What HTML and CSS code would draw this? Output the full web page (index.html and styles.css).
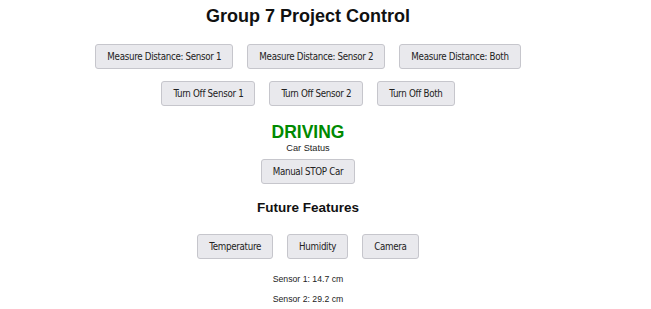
FILE: index.html
```html
<!DOCTYPE html>
<html>
<head>
<meta charset="utf-8">
<link rel="stylesheet" href="styles.css">
</head>
<body>
<main class="page">
  <h1 class="title">Group 7 Project Control</h1>
  <div class="row row-measure">
    <button class="btn">Measure Distance: Sensor 1</button>
    <button class="btn">Measure Distance: Sensor 2</button>
    <button class="btn">Measure Distance: Both</button>
  </div>
  <div class="row row-off">
    <button class="btn">Turn Off Sensor 1</button>
    <button class="btn">Turn Off Sensor 2</button>
    <button class="btn">Turn Off Both</button>
  </div>
  <div class="status">DRIVING</div>
  <div class="status-label">Car Status</div>
  <div class="row row-stop">
    <button class="btn">Manual STOP Car</button>
  </div>
  <h2 class="subtitle">Future Features</h2>
  <div class="row row-future">
    <button class="btn">Temperature</button>
    <button class="btn">Humidity</button>
    <button class="btn">Camera</button>
  </div>
  <p class="reading reading-first">Sensor 1: 14.7 cm</p>
  <p class="reading reading-second">Sensor 2: 29.2 cm</p>
</main>
</body>
</html>
```
FILE: styles.css
```css
html, body {
  margin: 0;
  padding: 0;
  background: #ffffff;
}
.page {
  width: 616px;
  display: flex;
  flex-direction: column;
  align-items: center;
  font-family: "Liberation Sans", Arial, sans-serif;
  color: #111;
}
.title {
  font-size: 18px;
  font-weight: bold;
  margin: 6px 0 0 0;
  line-height: 21px;
}
.row {
  display: flex;
  justify-content: center;
  gap: 14px;
}
.row-measure { margin-top: 17px; }
.row-off { margin-top: 12px; }
.row-stop { margin-top: 5px; }
.row-future { margin-top: 18px; }
.btn {
  font-family: "DejaVu Sans Condensed", "DejaVu Sans", sans-serif;
  font-size: 9.7px;
  letter-spacing: -0.3px;
  color: #222;
  background: #e9e9ed;
  border: 1px solid #c6c6cc;
  border-radius: 3px;
  height: 25px;
  padding: 0 11px;
}
.status {
  margin-top: 16px;
  font-size: 17.5px;
  font-weight: bold;
  color: #008a00;
  line-height: 20px;
}
.status-label {
  margin-top: 1px;
  font-size: 9.2px;
  line-height: 11px;
  color: #222;
}
.subtitle {
  font-size: 13.5px;
  font-weight: bold;
  margin: 16px 0 0 0;
  line-height: 16px;
}
.reading {
  font-size: 8.7px;
  line-height: 10px;
  margin: 0;
  color: #222;
}
.reading-first { margin-top: 15px; }
.reading-second { margin-top: 10px; }
```
